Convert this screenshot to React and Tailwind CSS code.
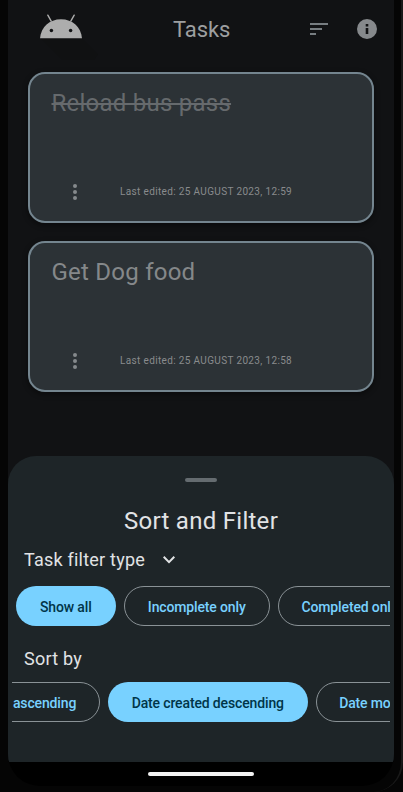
import React from 'react';

function AndroidLogo() {
  return (
    <svg className="h-[60px] w-[68px]" viewBox="0 0 68 60">
      <path d="M4 38 H46 L62 54 L58 60 H26 Z" fill="#101112" />
      <path d="M11.8 15.2 L15.2 21.2 M38.2 15.2 L34.8 21.2" stroke="#adadad" strokeWidth="1.4" strokeLinecap="round" />
      <path d="M4 38.3 C5 27 13.500 19.200 25 19.200 C36.500 19.200 45 27 46 38.300 Z" fill="#adadad" />
      <circle cx="15.400" cy="30.500" r="1.750" fill="#111214" />
      <circle cx="34.600" cy="30.500" r="1.750" fill="#111214" />
    </svg>
  );
}

function Header() {
  return (
    <header className="flex h-[72px] items-start pl-7">
      <AndroidLogo />
      <h1 className="ml-[69px] mt-[14px] w-[137px] text-[22px] leading-8 tracking-[-0.1px] text-[#9d9fa0]">Tasks</h1>
      <svg className="mt-[23px] h-3 w-[18px] shrink-0" viewBox="0 0 18 12" fill="#777d81">
        <path d="M0 0h18v2H0zM0 5h12v2H0zM0 10h6v2H0z" />
      </svg>
      <svg className="ml-[26.500px] mt-[17px] h-6 w-6 shrink-0" viewBox="0 0 24 24" fill="#86898c">
        <path d="M12 2a10 10 0 1 0 0 20 10 10 0 0 0 0-20zm1.300 15h-2.600v-6h2.600v6zm0-7.600h-2.600V7h2.600v2.400z" />
      </svg>
    </header>
  );
}

function TaskCard({ title, edited, done }) {
  return (
    <article className="flex h-[151px] w-[346px] flex-col rounded-[17px] border-2 border-[#74858f] bg-[#2c3236] pl-[21.500px] shadow-[0_2px_5px_1px_rgba(0,0,0,0.35)]">
      <h2 className={done ? 'mt-[13px] text-2xl leading-8 tracking-[0.24px] text-[#666a6d] line-through decoration-2' : 'mt-[13px] text-2xl leading-8 tracking-[0.24px] text-[#85888a]'}>
        <span>{title}</span>
      </h2>
      <div className="mt-[60.500px] flex h-6 items-center">
        <svg className="ml-[11.500px] h-6 w-6" viewBox="0 0 24 24" fill="#85898c">
          <circle cx="12" cy="6" r="2" />
          <circle cx="12" cy="12" r="2" />
          <circle cx="12" cy="18" r="2" />
        </svg>
        <span className="ml-[33px] whitespace-nowrap text-[10px] leading-4 tracking-[0.350px] text-[#898b8d]">{edited}</span>
      </div>
    </article>
  );
}

function Chip({ label, width, selected }) {
  return (
    <button
      className={`flex h-10 shrink-0 items-center justify-center whitespace-nowrap rounded-full pt-px text-sm font-medium tracking-[-0.140px] ${width} ${
        selected ? 'bg-[#78d1ff] text-[#003549]' : 'border border-[#8a9296] text-[#78d1ff]'
      }`}
    >
      {label}
    </button>
  );
}

function FilterSheet() {
  return (
    <section className="flex h-[306px] flex-col rounded-t-[28px] bg-[#1e2528] text-[#e1e3e5]">
      <div className="mx-auto mt-[22px] h-1 w-8 shrink-0 rounded-full bg-[#656c70]" />
      <h2 className="mt-[23px] text-center text-2xl leading-8 tracking-[0.280px]">Sort and Filter</h2>
      <div className="mt-[11px] flex h-6 items-center pl-4">
        <span className="w-[133px] text-lg leading-6 tracking-[0.220px]">Task filter type</span>
        <svg className="h-6 w-6" viewBox="0 0 24 24" fill="#e1e3e5">
          <path d="M7.410 8.090 12 12.670l4.590-4.580L18 9.500l-6 6-6-6z" />
        </svg>
      </div>
      <div className="ml-1 mt-[14px] flex w-[378px] shrink-0 gap-2 overflow-hidden pl-1">
        <Chip label="Show all" width="w-[99.500px]" selected />
        <Chip label="Incomplete only" width="w-[146.500px]" />
        <Chip label="Completed only" width="w-[143px]" />
      </div>
      <div className="mt-[21px] pl-4 text-lg leading-6 tracking-[0.220px]">Sort by</div>
      <div className="ml-1 mt-[11px] flex w-[378px] shrink-0 overflow-hidden">
        <div className="-ml-[104px] flex gap-2">
          <Chip label="Date created ascending" width="w-[192px]" />
          <Chip label="Date created descending" width="w-[199.500px]" selected />
          <Chip label="Date modified ascending" width="w-[200px]" />
        </div>
      </div>
    </section>
  );
}

export default function App() {
  return (
    <div className="h-[792px] w-[403px] overflow-hidden bg-[#050505]">
      <div className="h-[792px] w-[403px] overflow-hidden rounded-br-[30px] border-r-2 border-[#191919] bg-[#050505] pl-2 pr-[7px] font-['Roboto','Liberation_Sans',sans-serif]">
        <main className="h-[786px] w-[386px] overflow-hidden rounded-b-[32px] bg-black">
          <div className="h-[762px] bg-[#111214]">
            <div className="h-[456px]">
              <Header />
              <div className="flex flex-col gap-[18px] pl-5">
                <TaskCard title="Reload bus pass" edited="Last edited: 25 AUGUST 2023, 12:59" done />
                <TaskCard title="Get Dog food" edited="Last edited: 25 AUGUST 2023, 12:58" />
              </div>
            </div>
            <FilterSheet />
          </div>
          <div className="mx-auto mt-[10px] h-1 w-[106px] rounded-full bg-[#f2f2f2]" />
        </main>
      </div>
    </div>
  );
}
